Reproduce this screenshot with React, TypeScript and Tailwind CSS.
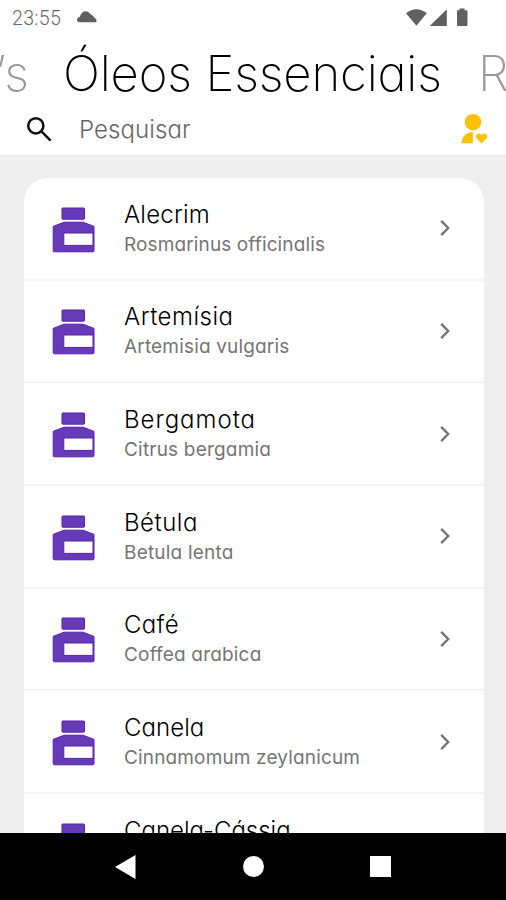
import { useState } from "react";

interface Oil {
    name: string;
    latin: string;
    nameClass: string;
    latinClass: string;
}

const oils: Oil[] = [
    { name: "Alecrim", latin: "Rosmarinus officinalis", nameClass: "tracking-[0.2px]", latinClass: "tracking-[0.12px]" },
    { name: "Artemísia", latin: "Artemisia vulgaris", nameClass: "tracking-[0.5px]", latinClass: "tracking-[0.17px]" },
    { name: "Bergamota", latin: "Citrus bergamia", nameClass: "tracking-[0.98px]", latinClass: "tracking-[0.2px]" },
    { name: "Bétula", latin: "Betula lenta", nameClass: "tracking-[0.5px]", latinClass: "tracking-[0.2px]" },
    { name: "Café", latin: "Coffea arabica", nameClass: "tracking-[0.35px]", latinClass: "tracking-[0.18px]" },
    { name: "Canela", latin: "Cinnamomum zeylanicum", nameClass: "tracking-[0.05px]", latinClass: "tracking-[0.15px]" },
    { name: "Canela-Cássia", latin: "Cinnamomum cassia", nameClass: "tracking-[0px]", latinClass: "tracking-[0.15px]" },
];

function BottleIcon() {
    return (
        <svg width="44" height="46" viewBox="0 0 44 46" className="mt-[2.4px] shrink-0">
            <g fill="#673ab7" stroke="#5a1fb0" strokeWidth="1" strokeLinejoin="round">
                <rect x="10" y="1" width="22.5" height="11.2" rx="0.8" />
                <path fillRule="evenodd" d="M12 15.2H31L42 19.4V43.6Q42 44.8 40.8 44.8H2.4Q1.2 44.8 1.2 43.6V19.4ZM11.8 26V38.4H41V26Z" />
            </g>
        </svg>
    );
}

function StatusBar() {
    return (
        <div className="flex h-9 shrink-0 items-center pl-[12px] pr-[36px] text-[#666]">
            <span className="w-[50px] pt-[2px] font-[Roboto] text-[19.5px] leading-none tracking-[0.35px] font-light">23:55</span>
            <svg width="20" height="12" viewBox="0 0 20 12" className="ml-[15px] -mt-[3px]">
                <path fill="#606060" d="M3.2 11.2C1 11.2 0 10.6 0 9C0 7.4 1.2 6.4 2.6 6.1C4 2.8 5.5 .2 8.5 .2C11 .2 12.4 1.6 13.8 3.6C15.6 4 16.6 5.3 17.2 6.6C18.8 7.6 19.6 8.7 19.6 9.9C19.6 10.8 18.9 11.2 17.6 11.2Z" />
            </svg>
            <svg width="64" height="20" viewBox="0 0 64 20" className="ml-auto -mt-[1px]">
                <g fill="#606060">
                    <path d="M0 5.2Q10.4 -2.6 20.8 5.2L10.4 17.8Z" />
                    <path d="M40.8 1.2V18H23.8Z" />
                    <path d="M53.5 .4H58.5V2.2H60.5Q61.5 2.2 61.5 3.2V17Q61.5 18 60.5 18H52Q51 18 51 17V3.2Q51 2.2 52 2.2H53.5Z" />
                </g>
            </svg>
        </div>
    );
}

function OilRow({ oil }: { oil: Oil }) {
    return (
        <li className="flex h-[102.7px] shrink-0 items-center border-b-[2.5px] border-[#f5f5f5] pl-[28px] pr-[29px]">
            <BottleIcon />
            <div className="ml-[28.5px] flex flex-col whitespace-nowrap pt-[1.5px]">
                <span className={`text-[24px] font-light leading-[30px] text-black ${oil.nameClass}`}>{oil.name}</span>
                <span className={`text-[19px] leading-[29px] text-[#757575] ${oil.latinClass}`}>{oil.latin}</span>
            </div>
            <svg width="20" height="20" viewBox="0 0 20 20" className="ml-auto">
                <path d="M6.2 2.9L13.2 10L6.2 17.1" fill="none" stroke="#757575" strokeWidth="2.4" />
            </svg>
        </li>
    );
}

export default function App() {
    const [search, setSearch] = useState("");

    return (
        <div className="flex h-[900px] w-[506px] flex-col overflow-hidden bg-white font-[Inter,sans-serif] [font-feature-settings:'cv11']">
            <StatusBar />
            <div className="flex h-[74px] shrink-0 items-center overflow-hidden whitespace-nowrap pt-[2px] text-[49px] font-extralight leading-[74px]">
                <div className="flex w-[29px] shrink-0 justify-end text-[#999]">
                    <span className="tracking-[-2px]">’</span>s
                </div>
                <h1 className="ml-[34px] w-[386px] shrink-0 text-black tracking-[-0.15px]">Óleos Essenciais</h1>
                <div className="ml-[29px] text-[#999]">R</div>
            </div>
            <div className="flex h-[45px] shrink-0 items-start pl-[26px] pr-[18px]">
                <svg width="26" height="26" viewBox="0 0 26 26" className="mt-[6px] shrink-0">
                    <g fill="none" stroke="#111" strokeWidth="2.5">
                        <circle cx="9.8" cy="9.8" r="7.6" />
                        <path d="M15.2 15.2L24.6 24.6" />
                    </g>
                </svg>
                <input
                    className="ml-[27px] h-[38px] w-[300px] text-[24px] font-light tracking-[0.1px] text-black outline-none placeholder:text-[#666]"
                    placeholder="Pesquisar"
                    value={search}
                    onChange={(e) => setSearch(e.target.value)}
                />
                <svg width="27" height="31" viewBox="0 0 27 31" className="ml-auto mt-[3px] shrink-0">
                    <g fill="#ffc107">
                        <circle cx="12" cy="9.2" r="8.3" />
                        <path d="M.4 30.2C.8 23.4 5.5 19.2 11.8 19V30.2Z" />
                        <path d="M20.6 30.4L15.8 25.6C14.4 24.1 14.8 22 16.4 21.2C17.9 20.4 19.7 20.9 20.6 22.2C21.5 20.9 23.3 20.4 24.8 21.2C26.4 22 26.8 24.1 25.4 25.6Z" />
                    </g>
                </svg>
            </div>
            <div className="min-h-0 flex-1 overflow-hidden bg-[#eee] pl-[23.5px] pr-[22px] pt-[23px]">
                <ul className="flex flex-col rounded-t-[24px] bg-white">
                    {oils.map((oil) => (
                        <OilRow key={oil.name} oil={oil} />
                    ))}
                </ul>
            </div>
            <nav className="flex h-[67px] shrink-0 items-center justify-between bg-black pl-[115px] pr-[115px]">
                <svg width="21" height="24" viewBox="0 0 21 24">
                    <path d="M0 12L20.5 0V24Z" fill="white" />
                </svg>
                <div className="h-[21px] w-[21px] rounded-full bg-white" />
                <div className="h-[21px] w-[21px] bg-white" />
            </nav>
        </div>
    );
}
